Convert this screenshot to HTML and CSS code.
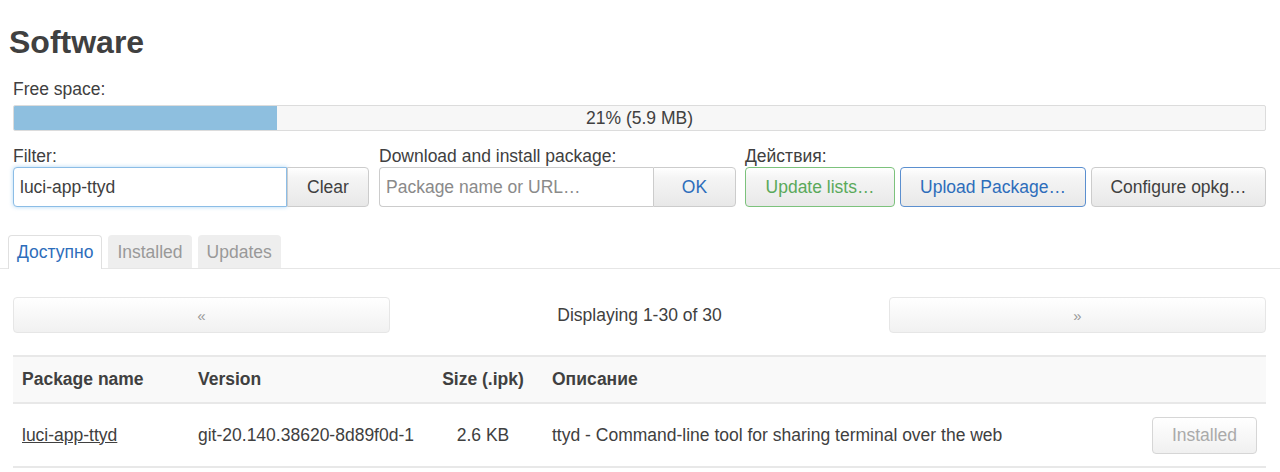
FILE: index.html
```html
<!doctype html>
<html lang="en">
    <head>
        <meta charset="UTF-8" />
        <meta name="viewport" content="width=device-width, initial-scale=1.0" />
        <title>Software</title>
        <link rel="stylesheet" href="styles.css">
    </head>
    <body>
        <main class="page">
            <h1>Software</h1>

            <div class="free-space">
                <div class="label">Free space:</div>
                <div class="progress">
                    <div class="progress-bar" style="width: 21%"></div>
                    <span class="progress-text">21% (5.9 MB)</span>
                </div>
            </div>

            <section class="controls">
                <div class="control-group filter">
                    <div class="label">Filter:</div>
                    <div class="input-group">
                        <input type="text" class="focused" value="luci-app-ttyd" />
                        <button class="btn btn-clear">Clear</button>
                    </div>
                </div>
                <div class="control-group download">
                    <div class="label">Download and install package:</div>
                    <div class="input-group">
                        <input type="text" placeholder="Package name or URL…" />
                        <button class="btn btn-ok">OK</button>
                    </div>
                </div>
                <div class="control-group actions">
                    <div class="label">Действия:</div>
                    <div class="action-buttons">
                        <button class="btn btn-action btn-green">Update lists…</button>
                        <button class="btn btn-action btn-blue">Upload Package…</button>
                        <button class="btn btn-action btn-config">Configure opkg…</button>
                    </div>
                </div>
            </section>

            <ul class="tabs">
                <li class="tab active">Доступно</li>
                <li class="tab">Installed</li>
                <li class="tab">Updates</li>
            </ul>

            <div class="pager">
                <button class="btn pager-btn">&laquo;</button>
                <div class="pager-info">Displaying 1-30 of 30</div>
                <button class="btn pager-btn">&raquo;</button>
            </div>

            <table class="packages">
                <thead>
                    <tr>
                        <th class="col-name">Package name</th>
                        <th class="col-version">Version</th>
                        <th class="col-size">Size (.ipk)</th>
                        <th class="col-desc">Описание</th>
                        <th class="col-action"></th>
                    </tr>
                </thead>
                <tbody>
                    <tr>
                        <td><a href="#">luci-app-ttyd</a></td>
                        <td>git-20.140.38620-8d89f0d-1</td>
                        <td class="col-size">2.6 KB</td>
                        <td>ttyd - Command-line tool for sharing terminal over the web</td>
                        <td class="col-action"><button class="btn btn-installed" disabled>Installed</button></td>
                    </tr>
                </tbody>
            </table>
        </main>
    </body>
</html>
```

FILE: styles.css
```css
body {
    margin: 0;
    padding: 0;
    font-family: "Liberation Sans", Arial, sans-serif;
    font-size: 17.5px;
    color: #404040;
    background-color: #fff;
}
.page {
    padding: 26px 14px 0 13px;
}
h1 {
    margin: 0 0 21px -4px;
    font-size: 32px;
    line-height: 32px;
    font-weight: bold;
    color: #404040;
}
.label {
    line-height: 20px;
    white-space: nowrap;
}
.free-space .label {
    margin-bottom: 6px;
}
.progress {
    position: relative;
    height: 24px;
    border: 1px solid #dcdcdc;
    border-radius: 2px;
    background-color: #f7f7f7;
    overflow: hidden;
}
.progress-bar {
    height: 100%;
    background-color: #8ebfdf;
}
.progress-text {
    position: absolute;
    left: 0;
    right: 0;
    top: 0;
    line-height: 25px;
    text-align: center;
    color: #404040;
}
.controls {
    display: flex;
    margin-top: 15px;
}
.filter {
    width: 356px;
    margin-right: 10px;
}
.download {
    width: 357px;
    margin-right: 9px;
}
.control-group .label {
    margin-bottom: 1px;
}
.input-group {
    display: flex;
    height: 40px;
}
.input-group input {
    flex: 1;
    min-width: 0;
    box-sizing: border-box;
    height: 40px;
    padding: 0 6px;
    font-family: inherit;
    font-size: 17.5px;
    color: #404040;
    border: 1px solid #ccc;
    border-right: none;
    border-radius: 4px 0 0 4px;
    outline: none;
}
.input-group input::placeholder {
    color: #8a8a8a;
}
.input-group input.focused {
    border: 1px solid #8cbde6;
    box-shadow: 0 0 4px rgba(82, 168, 236, 0.45);
}
.btn {
    font-family: inherit;
    font-size: 17.5px;
    color: #404040;
    background: linear-gradient(#fff, #f5f5f5 25%, #e8e8e8);
    border: 1px solid #ccc;
    border-radius: 4px;
    cursor: pointer;
    white-space: nowrap;
}
.input-group .btn {
    box-sizing: border-box;
    height: 40px;
    border-radius: 0 4px 4px 0;
}
.btn-clear {
    width: 82px;
}
.btn-ok {
    width: 83px;
    color: #2d6dbb;
}
.actions {
    flex: 1;
}
.action-buttons {
    display: flex;
}
.btn-action {
    box-sizing: border-box;
    height: 40px;
    padding: 0;
}
.btn-green {
    color: #5aa95a;
    border-color: #7cc27c;
    width: 150px;
    margin-right: 5px;
}
.btn-blue {
    color: #2d6dbb;
    border-color: #5b8fcf;
    width: 186px;
    margin-right: 5px;
}
.btn-config {
    flex: 1;
}
.tabs {
    display: flex;
    gap: 6px;
    list-style: none;
    margin: 28px -14px 0 -13px;
    padding: 0 0 0 8px;
    border-bottom: 1px solid #e6e6e6;
}
.tab {
    box-sizing: border-box;
    height: 33px;
    padding: 0 8px;
    line-height: 32px;
    color: #999;
    background-color: #eee;
    border: 1px solid #eee;
    border-bottom: none;
    border-radius: 4px 4px 0 0;
    margin-bottom: -1px;
}
.tab.active {
    color: #2d6dbb;
    background-color: #fff;
    border-color: #e0e0e0;
    height: 34px;
}
.pager {
    display: flex;
    align-items: center;
    margin-top: 28px;
}
.pager-btn {
    box-sizing: border-box;
    width: 377px;
    height: 36px;
    color: #999;
    font-size: 15px;
    border-color: #e6e6e6;
    background: linear-gradient(#fff, #f1f1f1);
}
.pager-info {
    flex: 1;
    text-align: center;
}
.packages {
    width: 100%;
    margin-top: 22px;
    border-collapse: collapse;
}
.packages th,
.packages td {
    padding: 0 9px;
    text-align: left;
    border-top: 2px solid #e8e8e8;
    border-bottom: 2px solid #e8e8e8;
}
.packages th {
    height: 45px;
    font-weight: bold;
    background-color: #f9f9f9;
}
.packages td {
    height: 62px;
}
.packages a {
    color: #404040;
}
.col-name {
    width: 158px;
}
.col-version {
    width: 216px;
}
.packages .col-size {
    width: 102px;
    text-align: center;
}
.packages .col-action {
    text-align: right;
}
.btn-installed {
    width: 105px;
    height: 37px;
    color: #aaa;
    border-color: #d6d6d6;
    background: linear-gradient(#fff, #f0f0f0);
    cursor: default;
}
```
